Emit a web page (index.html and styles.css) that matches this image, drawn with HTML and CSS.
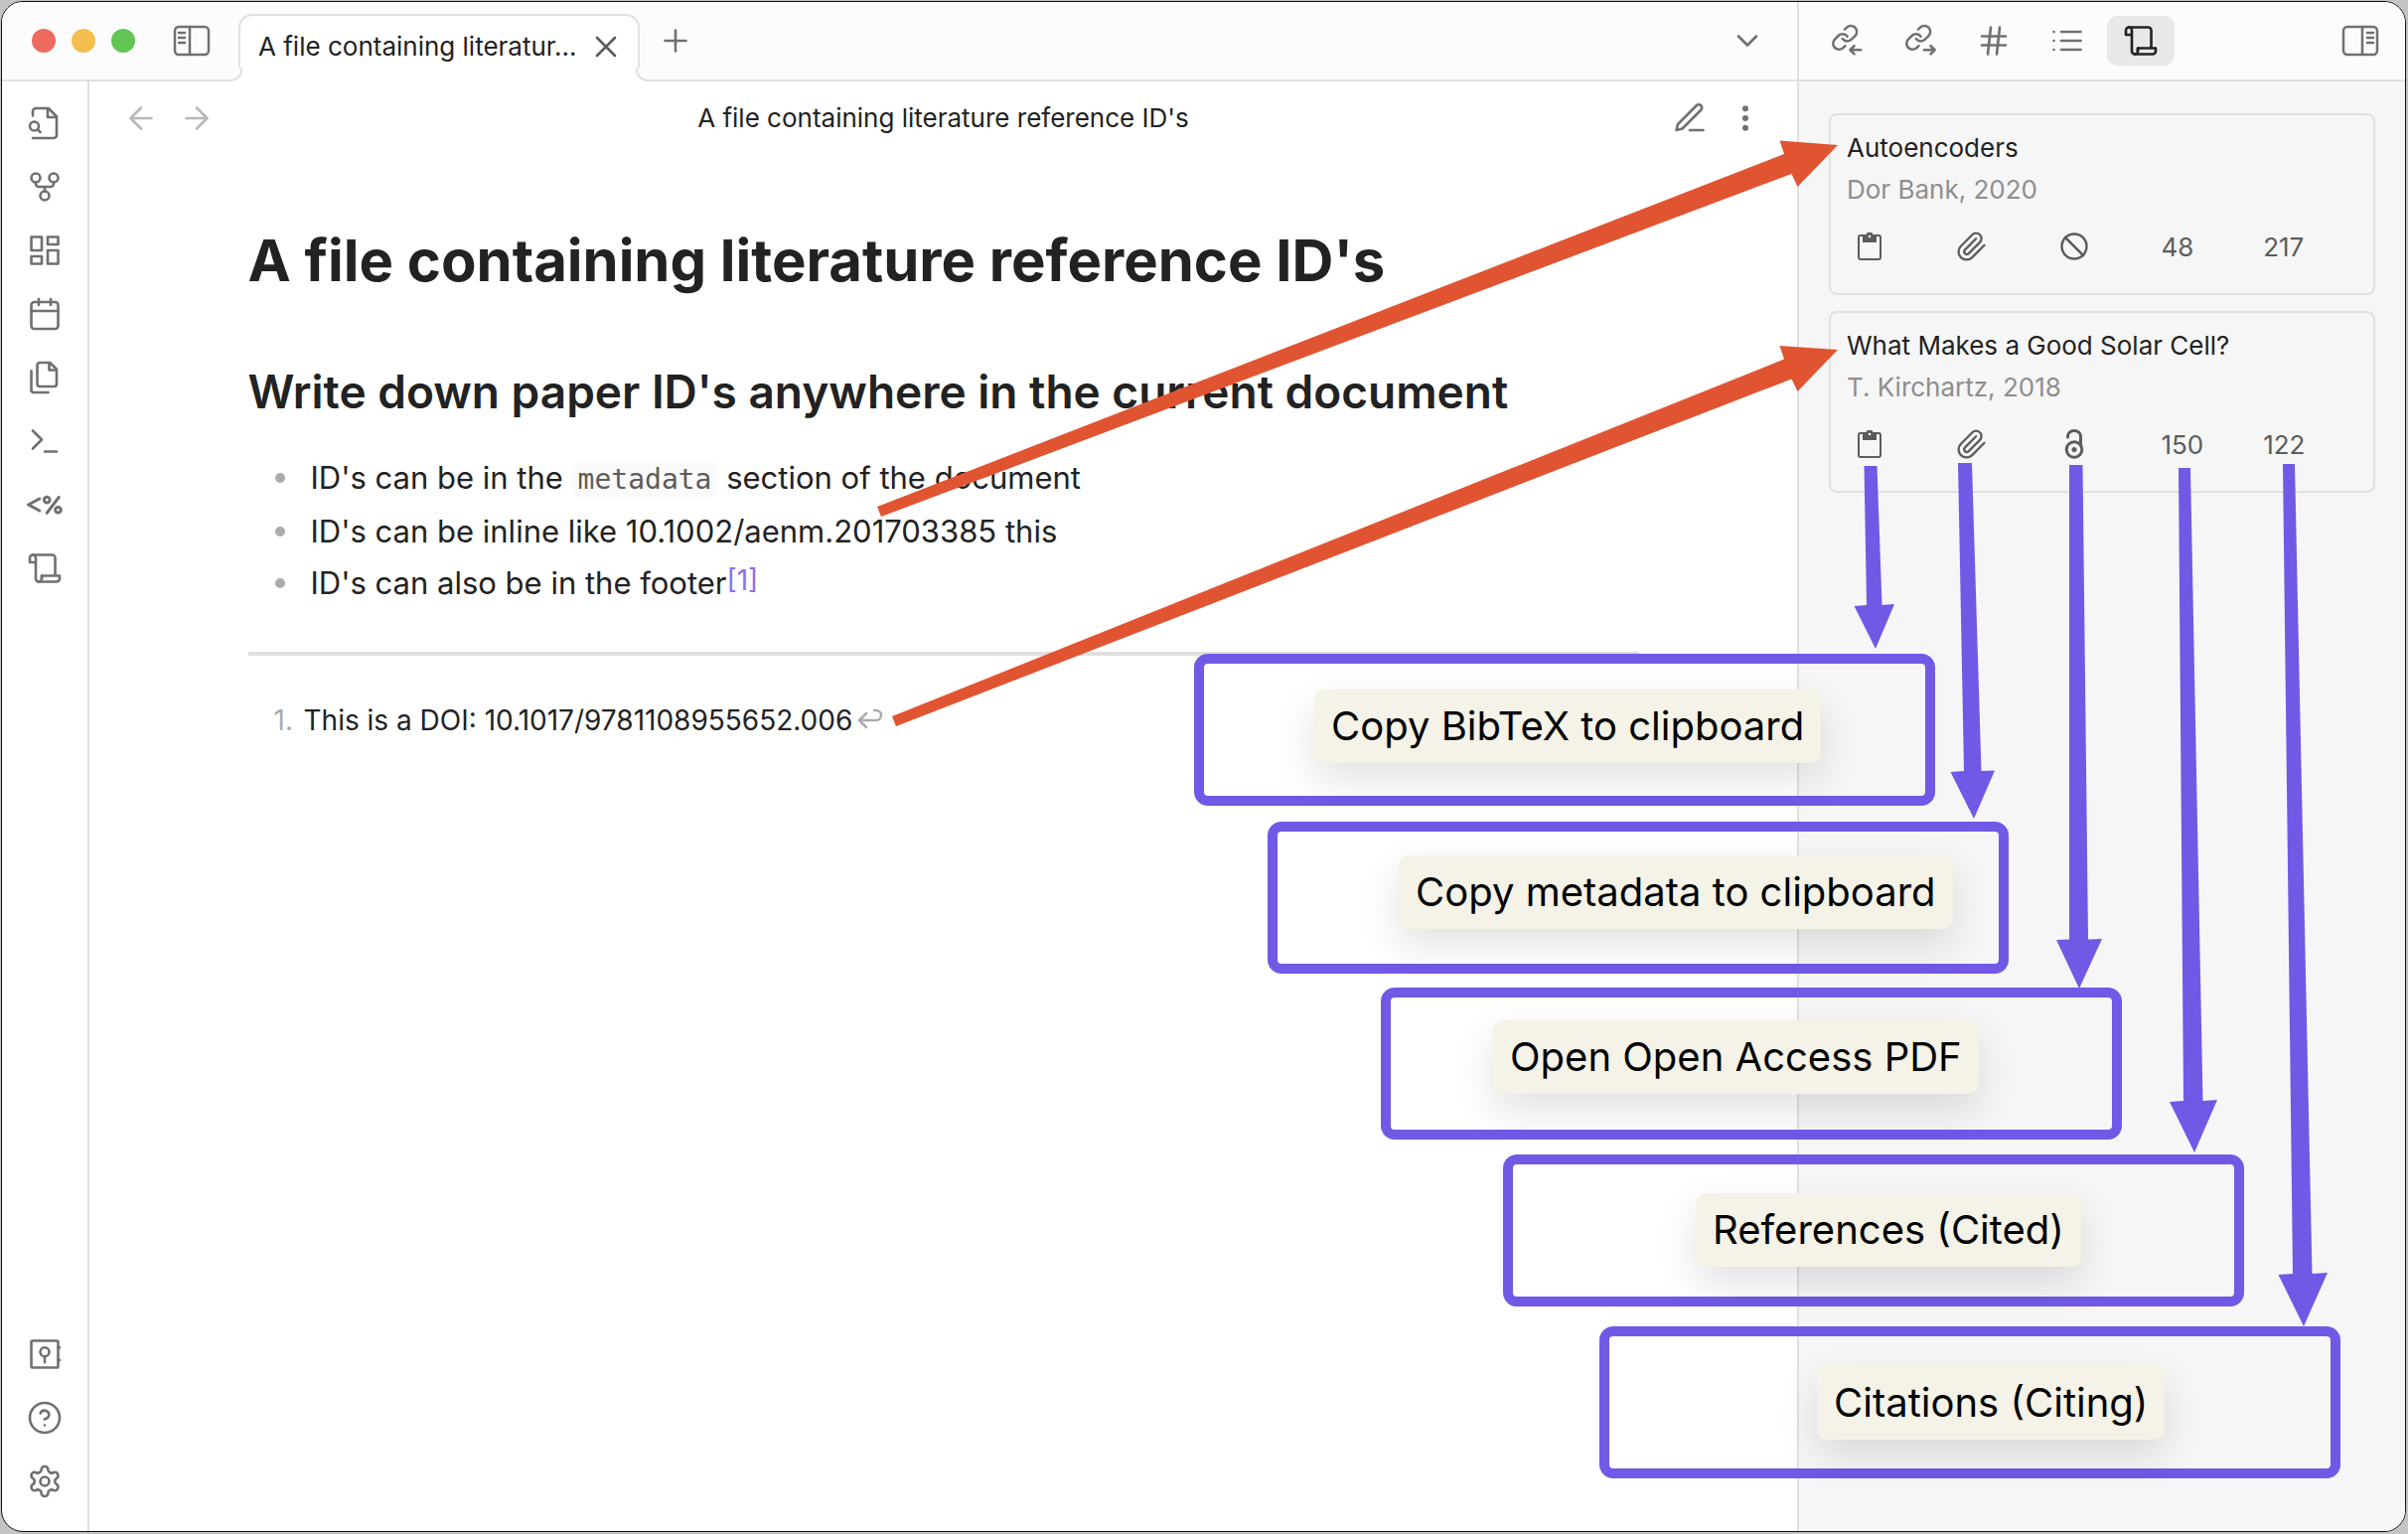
FILE: index.html
```html
<!DOCTYPE html>
<html lang="en">
<head>
<meta charset="utf-8">
<title>A file containing literature reference ID's</title>
<link rel="stylesheet" href="styles.css">
</head>
<body>
<svg class="defs" aria-hidden="true">
  <symbol id="i-sidebar" viewBox="0 0 38 32"><rect x="2" y="2" width="34" height="28" rx="4"/><path d="M17 2v28M6 8h6M6 13h6M6 18h6"/></symbol>
  <symbol id="i-scroll" viewBox="0 0 24 24"><path d="M10 17v2a2 2 0 0 1-2 2a2 2 0 0 1-2-2V5a2 2 0 0 0-2-2a2 2 0 0 0-2 2v3h4"/><path d="M8 21h12a2 2 0 0 0 2-2v-2H10v2M19 17V5a2 2 0 0 0-2-2H4"/></symbol>
  <symbol id="i-chain" viewBox="0 0 24 24"><path d="M10 13a5 5 0 0 0 7.540.54l3-3a5 5 0 0 0-7.070-7.070l-1.720 1.710"/><path d="M14 11a5 5 0 0 0-7.540-.54l-3 3a5 5 0 0 0 7.070 7.070l1.710-1.710"/></symbol>
  <symbol id="i-clip" viewBox="0 0 24 24"><path d="M21.4 11.1l-9.2 9.2a6 6 0 0 1-8.5-8.5l8.6-8.6a4 4 0 0 1 5.7 5.7l-8.6 8.6a2 2 0 0 1-2.8-2.8l8.5-8.5"/></symbol>
  <symbol id="i-board" viewBox="0 0 24 28"><rect x="1" y="3" width="22" height="24" rx="2"/><path class="solid" d="M5 3h3.500a3.500 3.500 0 0 1 7 0H19v7H5z"/><circle class="hole" cx="12" cy="4" r="1.300"/></symbol>
</svg>

<div class="window">
  <header class="titlebar">
    <div class="tabs">
      <div class="lights"><span class="light red"></span><span class="light yellow"></span><span class="light green"></span></div>
      <button class="icon-btn toggle" aria-label="Collapse left sidebar"><svg class="wide"><use href="#i-sidebar"/></svg></button>
      <div class="tab"><span class="tab-name">A file containing literatur...</span><button class="icon-btn dark" aria-label="Close tab"><svg viewBox="0 0 24 24"><path d="M18 6 6 18M6 6l12 12"/></svg></button></div>
      <button class="icon-btn plus" aria-label="New tab"><svg viewBox="0 0 24 24"><path d="M5 12h14M12 5v14"/></svg></button>
      <button class="icon-btn chevron" aria-label="Tab list"><svg viewBox="0 0 24 24"><path d="m6 9 6 6 6-6"/></svg></button>
    </div>
    <div class="panel-tabs">
      <button class="panel-tab" aria-label="Backlinks"><svg viewBox="0 0 24 24"><g class="chain" transform="translate(1.2 .3) scale(.8)"><use href="#i-chain" width="24" height="24"/></g><path d="M21.500 18.200h-7M17 15.500l-2.700 2.700 2.700 2.700"/></svg></button>
      <button class="panel-tab" aria-label="Outgoing links"><svg viewBox="0 0 24 24"><g class="chain" transform="translate(1.2 .3) scale(.8)"><use href="#i-chain" width="24" height="24"/></g><path d="M14.500 18.200h7M19 15.500l2.700 2.700-2.700 2.700"/></svg></button>
      <button class="panel-tab" aria-label="Tags"><svg viewBox="0 0 24 24"><path d="M4 9h16M4 15h16M10 3 8 21M16 3l-2 18"/></svg></button>
      <button class="panel-tab" aria-label="Outline"><svg viewBox="0 0 24 24"><path d="M8 6h13M8 12h13M8 18h13M3 6h.01M3 12h.01M3 18h.01"/></svg></button>
      <button class="panel-tab active" aria-label="References"><svg><use href="#i-scroll"/></svg></button>
      <button class="icon-btn panel-toggle" aria-label="Collapse right sidebar"><svg class="wide flip"><use href="#i-sidebar"/></svg></button>
    </div>
  </header>

  <div class="body">
    <nav class="ribbon">
      <div class="ribbon-group">
        <button class="icon-btn" aria-label="Quick switcher"><svg viewBox="0 0 24 24"><path d="M4 22h14a2 2 0 0 0 2-2V7.500L14.500 2H6a2 2 0 0 0-2 2v3"/><path d="M14 2v6h6"/><circle cx="5" cy="14" r="3"/><path d="m9 18-1.500-1.500"/></svg></button>
        <button class="icon-btn" aria-label="Graph view"><svg viewBox="0 0 24 24"><circle cx="12" cy="18" r="3"/><circle cx="6" cy="6" r="3"/><circle cx="18" cy="6" r="3"/><path d="M18 9v1a2 2 0 0 1-2 2H8a2 2 0 0 1-2-2V9M12 12v3"/></svg></button>
        <button class="icon-btn" aria-label="New canvas"><svg viewBox="0 0 24 24"><path d="M3 3h7v9H3zM14 3h7v5h-7zM14 12h7v9h-7zM3 16h7v5H3z"/></svg></button>
        <button class="icon-btn" aria-label="Daily note"><svg viewBox="0 0 24 24"><rect x="3" y="4" width="18" height="18" rx="2"/><path d="M16 2v4M8 2v4M3 10h18"/></svg></button>
        <button class="icon-btn" aria-label="Templates"><svg viewBox="0 0 24 24"><path d="M15.500 2H8.600a1.600 1.600 0 0 0-1.600 1.600v12.800A1.600 1.600 0 0 0 8.600 18h9.800a1.600 1.600 0 0 0 1.600-1.600V6.500z"/><path d="M3 7.600v12.800A1.600 1.600 0 0 0 4.600 22h9.800M15 2v5h5"/></svg></button>
        <button class="icon-btn" aria-label="Command palette"><svg viewBox="0 0 24 24"><path d="m4 17 6-6-6-6M12 19h8"/></svg></button>
        <button class="icon-btn" aria-label="Templater"><svg viewBox="0 0 24 24"><path class="heavy" d="M8.500 8 1 12l7.500 4"/><path class="heavy" d="M21.500 7 13.500 17.500"/><circle class="heavy" cx="13.500" cy="8.800" r="1.900"/><circle class="heavy" cx="21" cy="15.500" r="1.900"/></svg></button>
        <button class="icon-btn" aria-label="Reference map"><svg><use href="#i-scroll"/></svg></button>
      </div>
      <div class="ribbon-group">
        <button class="icon-btn" aria-label="Open another vault"><svg viewBox="0 0 24 24"><rect x="3" y="3" width="18" height="18" rx="1"/><circle cx="12" cy="10.500" r="3"/><path d="M12 13.500v4M21 7.500h1M21 16h1"/></svg></button>
        <button class="icon-btn" aria-label="Help"><svg viewBox="0 0 24 24"><circle cx="12" cy="12" r="10"/><path d="M9.100 9a3 3 0 0 1 5.800 1c0 2-3 3-3 3M12 17h.01"/></svg></button>
        <button class="icon-btn" aria-label="Settings"><svg viewBox="0 0 24 24"><path d="M12.220 2h-.44a2 2 0 0 0-2 2v.18a2 2 0 0 1-1 1.730l-.43.25a2 2 0 0 1-2 0l-.15-.08a2 2 0 0 0-2.730.73l-.22.38a2 2 0 0 0 .73 2.730l.15.1a2 2 0 0 1 1 1.720v.51a2 2 0 0 1-1 1.740l-.15.09a2 2 0 0 0-.73 2.730l.22.38a2 2 0 0 0 2.730.73l.15-.08a2 2 0 0 1 2 0l.43.25a2 2 0 0 1 1 1.730V20a2 2 0 0 0 2 2h.44a2 2 0 0 0 2-2v-.18a2 2 0 0 1 1-1.730l.43-.25a2 2 0 0 1 2 0l.15.08a2 2 0 0 0 2.730-.73l.22-.39a2 2 0 0 0-.73-2.730l-.15-.08a2 2 0 0 1-1-1.740v-.5a2 2 0 0 1 1-1.740l.15-.09a2 2 0 0 0 .73-2.730l-.22-.38a2 2 0 0 0-2.730-.73l-.15.08a2 2 0 0 1-2 0l-.43-.25a2 2 0 0 1-1-1.730V4a2 2 0 0 0-2-2z"/><circle cx="12" cy="12" r="3"/></svg></button>
      </div>
    </nav>

    <main class="view">
      <div class="view-header">
        <div class="nav-buttons">
          <button class="icon-btn faint" aria-label="Back"><svg viewBox="0 0 24 24"><path d="M19 12H5M12 19l-7-7 7-7"/></svg></button>
          <button class="icon-btn faint" aria-label="Forward"><svg viewBox="0 0 24 24"><path d="M5 12h14M12 5l7 7-7 7"/></svg></button>
        </div>
        <span class="view-title">A file containing literature reference ID's</span>
        <div class="view-actions">
          <button class="icon-btn" aria-label="Edit"><svg viewBox="0 0 24 24"><path d="M12 20h9M16.500 3.500a2.120 2.120 0 0 1 3 3L7 19l-4 1 1-4z"/></svg></button>
          <button class="icon-btn" aria-label="More options"><svg viewBox="0 0 24 24"><circle class="dot" cx="12" cy="12" r="1"/><circle class="dot" cx="12" cy="5.500" r="1"/><circle class="dot" cx="12" cy="18.500" r="1"/></svg></button>
        </div>
      </div>
      <article class="note">
        <h1>A file containing literature reference ID's</h1>
        <h2>Write down paper ID's anywhere in the current document</h2>
        <ul>
          <li>ID's can be in the <code>metadata</code> section of the document</li>
          <li>ID's can be inline like 10.1002/aenm.201703385 this</li>
          <li>ID's can also be in the footer<a class="fn" href="#fn1">[1]</a></li>
        </ul>
        <hr>
        <ol>
          <li id="fn1"><span class="num">1.</span><span>This is a DOI: 10.1017/9781108955652.006</span><a class="back" href="#" aria-label="Back to text"><svg viewBox="0 0 28 24"><path d="M10 5 3 12l7 7M3 12h17a5 5 0 0 0 0-10h-2"/></svg></a></li>
        </ol>
      </article>
    </main>

    <aside class="panel">
      <section class="card">
        <h3>Autoencoders</h3>
        <p>Dor Bank, 2020</p>
        <div class="stats">
          <button aria-label="Copy BibTeX"><svg class="board"><use href="#i-board"/></svg></button>
          <button aria-label="Copy metadata"><svg class="paper"><use href="#i-clip"/></svg></button>
          <button aria-label="No open access PDF"><svg class="ban" viewBox="0 0 28 28"><circle cx="14" cy="14" r="12.500"/><path d="m5 5 18 18"/></svg></button>
          <span>48</span><span>217</span>
        </div>
      </section>
      <section class="card">
        <h3>What Makes a Good Solar Cell?</h3>
        <p>T. Kirchartz, 2018</p>
        <div class="stats">
          <button aria-label="Copy BibTeX"><svg class="board"><use href="#i-board"/></svg></button>
          <button aria-label="Copy metadata"><svg class="paper"><use href="#i-clip"/></svg></button>
          <button aria-label="Open access PDF"><svg class="access" viewBox="0 0 20 30"><circle cx="10" cy="20.500" r="7.800"/><circle class="solid" cx="10" cy="20.500" r="2.500"/><path d="M3.500 8V7a6.500 5.500 0 0 1 13 0v9"/></svg></button>
          <span>150</span><span>122</span>
        </div>
      </section>
    </aside>
  </div>
</div>

<div class="annotations">
  <div class="callout c1"><span class="chip">Copy BibTeX to clipboard</span></div>
  <div class="callout c2"><span class="chip">Copy metadata to clipboard</span></div>
  <div class="callout c3"><span class="chip">Open Open Access PDF</span></div>
  <div class="callout c4"><span class="chip">References (Cited)</span></div>
  <div class="callout c5"><span class="chip">Citations (Citing)</span></div>
  <svg class="arrows" viewBox="0 0 2424 1544">
    <g class="to-card">
      <path d="M883 510 1796 155 1791.500 141.500 1850 146 1809.500 188 1803.500 175 887 520z"/>
      <path d="M898 721 1796 361.500 1791.500 348 1850 352 1809.500 394 1803.500 381.500 902 731z"/>
    </g>
    <g class="to-callout">
      <path d="M1876.500 469H1889.500L1894.500 609 1907 608 1888 653 1866.500 610 1879 609z"/>
      <path d="M1971 466H1985L1994.500 776 2008 775.500 1987 824 1963.500 777 1977 776z"/>
      <path d="M2083 468H2096.500L2102 945.500 2116 945 2093 995 2070 946 2083 945.500z"/>
      <path d="M2193 471H2205L2217.500 1108 2232 1107 2209 1160 2184 1109 2198 1108z"/>
      <path d="M2298 467H2310L2327.500 1282 2343 1281 2319 1335 2293.500 1283 2308 1282z"/>
    </g>
  </svg>
</div>
</body>
</html>
```

FILE: styles.css
```css
* { box-sizing: border-box; }
html, body { height: 100%; margin: 0; }
body {
  position: relative;
  padding: 1px 2px 2px 1px;
  background: #c4c4c4;
  font-family: Inter, "Liberation Sans", sans-serif;
  font-size: 26px;
  color: #222;
  overflow: hidden;
}
.defs { position: absolute; width: 0; height: 0; }
button { border: 0; background: none; padding: 0; font: inherit; color: inherit; display: flex; align-items: center; justify-content: center; }
a { text-decoration: none; }
svg { display: block; width: 36px; height: 36px; fill: none; stroke: currentColor; stroke-width: 1.75; stroke-linecap: round; stroke-linejoin: round; }
.wide { width: 38px; height: 32px; stroke-width: 2.5; }
.flip { transform: scaleX(-1); }
.heavy { stroke-width: 2; }
.chain { stroke-width: 2.1; }
.dot { stroke-width: 2; fill: currentColor; }
.solid { fill: currentColor; stroke: none; }
.hole { fill: #f6f6f6; stroke: none; }
.icon-btn { color: #707070; }
.icon-btn.faint { color: #b8b8b8; }
.icon-btn.dark { color: #5c5c5c; }

.window {
  display: flex;
  flex-direction: column;
  height: 100%;
  border: 1px solid #111;
  border-radius: 22px;
  background: #fff;
  overflow: hidden;
}
.titlebar { display: flex; flex: none; height: 80px; background: #fcfcfc; }
.tabs { display: flex; flex: 1; align-items: center; padding-left: 30px; border-bottom: 2px solid #e0e0e0; }
.lights { display: flex; gap: 16px; }
.light { width: 24px; height: 24px; border-radius: 50%; }
.red { background: #ed6a5e; }
.yellow { background: #f5bf4f; }
.green { background: #61c554; }
.toggle { margin-left: 38px; }
.tab {
  position: relative;
  display: flex;
  align-items: center;
  justify-content: space-between;
  align-self: flex-end;
  width: 404px;
  height: 68px;
  margin: 0 0 -2px 28px;
  padding: 0 14px 4px 18px;
  border: 2px solid #e0e0e0;
  border-bottom: 0;
  border-radius: 14px 14px 0 0;
  background: #fff;
}
.tab::before, .tab::after {
  content: "";
  position: absolute;
  bottom: 0;
  width: 12px;
  height: 12px;
  border: 2px solid #e0e0e0;
  border-top: 0;
  background: #fcfcfc;
}
.tab::before { left: -12px; border-left: 0; border-radius: 0 0 12px 0; box-shadow: 3px 3px 0 1px #fff; clip-path: inset(0); }
.tab::after { right: -12px; border-right: 0; border-radius: 0 0 0 12px; box-shadow: -3px 3px 0 1px #fff; clip-path: inset(0); }
.tab-name { line-height: 32px; white-space: nowrap; }
.plus { margin-left: 18px; }
.chevron { margin-left: auto; margin-right: 32px; }
.panel-tabs {
  display: flex;
  flex: none;
  align-items: center;
  gap: 6px;
  width: 612px;
  padding: 0 26px 0 14px;
  border-left: 2px solid #e0e0e0;
  border-bottom: 2px solid #e0e0e0;
}
.panel-tab { width: 68px; height: 50px; border-radius: 10px; color: #707070; }
.panel-tab.active { background: #e8e8e8; color: #222; }
.panel-toggle { margin-left: auto; }

.body { display: flex; flex: 1; min-height: 0; }
.ribbon {
  display: flex;
  flex: none;
  flex-direction: column;
  justify-content: space-between;
  width: 88px;
  padding: 24px 0 32px;
  border-right: 2px solid #e0e0e0;
}
.ribbon-group { display: flex; flex-direction: column; align-items: center; gap: 28px; }

.view { flex: 1; min-width: 0; }
.view-header { display: grid; grid-template-columns: 1fr auto 1fr; align-items: center; height: 74px; padding: 0 34px; }
.nav-buttons { display: flex; gap: 20px; }
.view-title { line-height: 32px; }
.view-actions { display: flex; justify-content: flex-end; gap: 20px; }
.note { max-width: 1400px; margin: 0 auto; padding-top: 66px; }
h1 { margin: 0; font-size: 58px; line-height: 80px; font-weight: 700; white-space: nowrap; }
h2 { margin: 62px 0 0; font-size: 46px; line-height: 60px; font-weight: 600; white-space: nowrap; }
ul { margin: 31px 0 0; padding: 0 0 0 63px; list-style: none; font-size: 31px; line-height: 52px; }
ul li { position: relative; }
ul li::before { content: ""; position: absolute; left: -36px; top: 21px; width: 10px; height: 10px; border-radius: 50%; background: #ababab; }
code { padding: 2px 6px; border-radius: 8px; background: #fafafa; color: #5c5c5c; font-family: "DejaVu Sans Mono", "Liberation Mono", monospace; font-size: 28px; }
.fn { color: #8a70f0; font-size: 28px; line-height: 1; vertical-align: 4px; }
hr { height: 4px; margin: 43px 0; border: 0; background: #e0e0e0; }
ol { margin: 0; padding: 0 0 0 26px; list-style: none; font-size: 28px; line-height: 44px; }
ol li { display: flex; align-items: center; }
.num { width: 30px; color: #ababab; }
.back { margin-left: 4px; color: #ababab; }
.back svg { width: 28px; height: 24px; stroke-width: 2.5; }

.panel { flex: none; width: 612px; padding: 32px 30px; border-left: 2px solid #e0e0e0; background: #f6f6f6; display: flex; flex-direction: column; gap: 16px; }
.card { padding: 12px 16px 11px; border: 2px solid #e0e0e0; border-radius: 8px; }
.card h3, .card p { margin: 0; font-size: 26px; line-height: 42px; font-weight: 400; }
.card p { color: #8e8e8e; }
.stats { display: grid; grid-template-columns: repeat(5, 1fr); align-items: center; height: 72px; color: #5c5c5c; }
.stats button { justify-self: start; width: 46px; }
.stats span { padding-left: 8px; }
.board { width: 24px; height: 28px; stroke-width: 2; }
.paper { width: 32px; height: 32px; }
.ban { width: 28px; height: 28px; stroke-width: 2.5; }
.access { width: 20px; height: 30px; stroke-width: 3; }

.annotations { position: absolute; top: 0; left: 0; width: 2424px; height: 1544px; pointer-events: none; }
.callout { position: absolute; display: flex; align-items: flex-start; width: 746px; height: 153px; border: 10px solid #7159e6; border-radius: 14px; }
.chip {
  height: 74px;
  padding: 0 17px;
  border-radius: 10px;
  background: #f5f2e7;
  color: #000;
  font-size: 40px;
  line-height: 74px;
  white-space: nowrap;
  box-shadow: 0 16px 40px rgba(0, 0, 0, .12);
}
.c1 { left: 1202px; top: 658px; padding: 26px 0 0 111px; }
.c2 { left: 1276px; top: 827px; padding: 24px 0 0 122px; }
.c3 { left: 1390px; top: 994px; padding: 23px 0 0 103px; }
.c4 { left: 1513px; top: 1162px; padding: 29px 0 0 184px; }
.c5 { left: 1610px; top: 1335px; padding: 30px 0 0 209px; }
.arrows { position: absolute; inset: 0; width: 2424px; height: 1544px; stroke: none; }
.to-card { fill: #e15432; }
.to-callout { fill: #7159e6; }
```
